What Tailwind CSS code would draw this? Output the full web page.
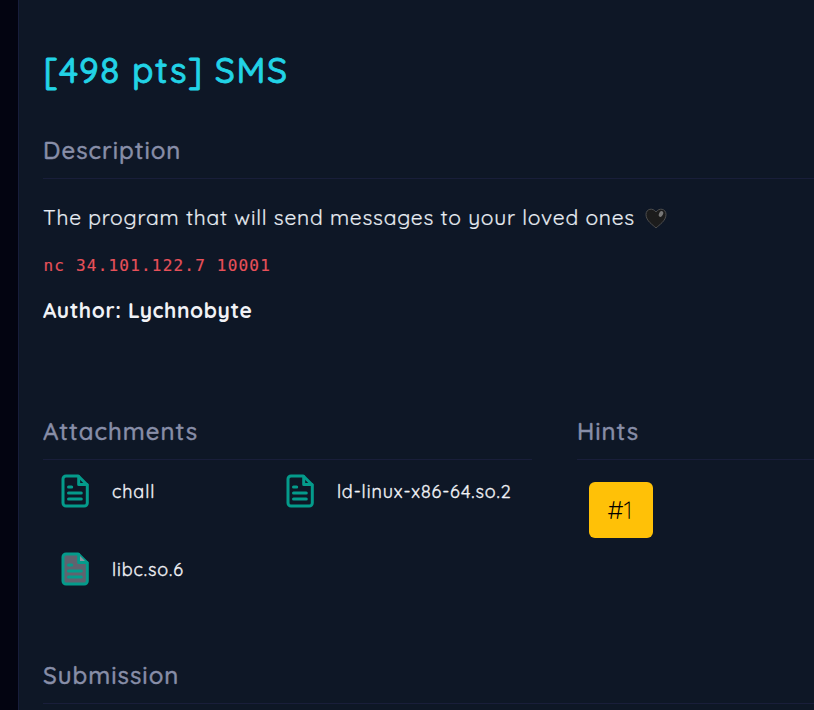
<!DOCTYPE html>
<html lang="en"><head><meta charset="utf-8"><title>SMS</title>
<script src="https://cdn.jsdelivr.net/npm/@tailwindcss/browser@4"></script></head>
<body class="flex h-[710px] w-[814px] overflow-hidden bg-[#030411] pl-[18px] font-['Quicksand','Lato',sans-serif] whitespace-nowrap">
<svg class="hidden"><symbol id="file" viewBox="0 0 30 34"><path d="M6 2h12.300l9 9v18a3 3 0 0 1-3 3H6a3 3 0 0 1-3-3V5a3 3 0 0 1 3-3Z" stroke="#049b8b" stroke-width="3" stroke-linejoin="round"/><path d="M18.700 2.500V10.500H27M8.500 13h3.200M8.500 19h12.800M8.500 25h12.800" fill="none" stroke="#049b8b" stroke-width="3" stroke-linecap="round" stroke-linejoin="round"/></symbol></svg>
<main class="flex flex-1 flex-col border-l border-[#171d3b] bg-[#0e1726] pl-6">
<h1 class="mt-[50px] h-10 pl-[0.5px] text-[35px] leading-10 font-medium tracking-[1.55px] text-[#22d3e6] [-webkit-text-stroke:0.8px_#22d3e6]">[498 pts] SMS</h1>
<section class="mt-[39px] h-[252px]">
<h2 class="h-[50px] border-b border-[#191e3a] pt-[5px] text-2xl leading-[32px] font-medium tracking-[1px] text-[#888ea8] [-webkit-text-stroke:0.45px_#888ea8]">Description</h2>
<p class="mt-[22px] flex h-8 items-center text-[21px] leading-8 tracking-[.76px] text-[#e8edf3] [-webkit-text-stroke:0.2px_#e8edf3]">The program that will send messages to your loved ones
<svg class="ml-[10px] mt-[2px]" width="22" height="21" viewBox="0 0 22 21"><path d="M11 20C8 17 1 13 1 6.500C1 .500 8-.500 11 4C14-.500 21 .500 21 6.500C21 13 14 17 11 20Z" fill="#1c1c1c" stroke="#4d4d4d"/><ellipse cx="16" cy="6" rx="2" ry="3" transform="rotate(25 16 6)" fill="#777"/></svg></p>
<code class="mt-[21px] block h-6 pl-[0.5px] font-['DejaVu_Sans_Mono',monospace] text-[16px] leading-6 tracking-[1.200px] text-[#e7515a] [-webkit-text-stroke:0.15px_#e7515a]">nc 34.101.122.7 10001</code>
<p class="mt-[16px] h-8 text-[21px] leading-8 font-bold tracking-[.58px] text-[#f1f2f6]">Author: Lychnobyte</p>
</section>
<div class="mt-[29px] flex h-[244px] gap-[44px]">
<section class="w-[489px] shrink-0">
<h2 class="h-[50px] border-b border-[#191e3a] pt-[5px] text-2xl leading-[32px] font-medium tracking-[1px] text-[#888ea8] [-webkit-text-stroke:0.45px_#888ea8]">Attachments</h2>
<div class="grid grid-cols-[225px_1fr] gap-y-[44px] pt-[14px] pl-[17px] text-[18px] leading-[36px] tracking-[.9px] text-[#f1f2f6] [-webkit-text-stroke:0.35px_#f1f2f6]">
<a class="flex h-[34px] gap-[22px]"><svg class="h-[34px] w-[30px]" fill="none"><use href="#file"/></svg><span>chall</span></a>
<a class="flex h-[34px] gap-[22px]"><svg class="h-[34px] w-[30px]" fill="none"><use href="#file"/></svg><span>ld-linux-x86-64.so.2</span></a>
<a class="flex h-[34px] gap-[22px]"><svg class="h-[34px] w-[30px]" fill="#60636f"><use href="#file"/><path d="M20 4v5H25Z" fill="#8c969f"/></svg><span>libc.so.6</span></a>
</div></section>
<section class="flex-1 pl-px">
<h2 class="h-[50px] border-b border-[#191e3a] pt-[5px] text-2xl leading-[32px] font-medium tracking-[1px] text-[#888ea8] [-webkit-text-stroke:0.45px_#888ea8]">Hints</h2>
<button class="mt-[22px] ml-3 h-14 w-16 rounded-md bg-[#ffc107] pr-[2px] text-[25px] font-light text-black">#1</button>
</section></div>
<h2 class="h-[50px] border-b border-[#191e3a] pt-[5px] text-2xl leading-[32px] font-medium tracking-[1px] text-[#888ea8] [-webkit-text-stroke:0.45px_#888ea8]">Submission</h2>
</main></body></html>
